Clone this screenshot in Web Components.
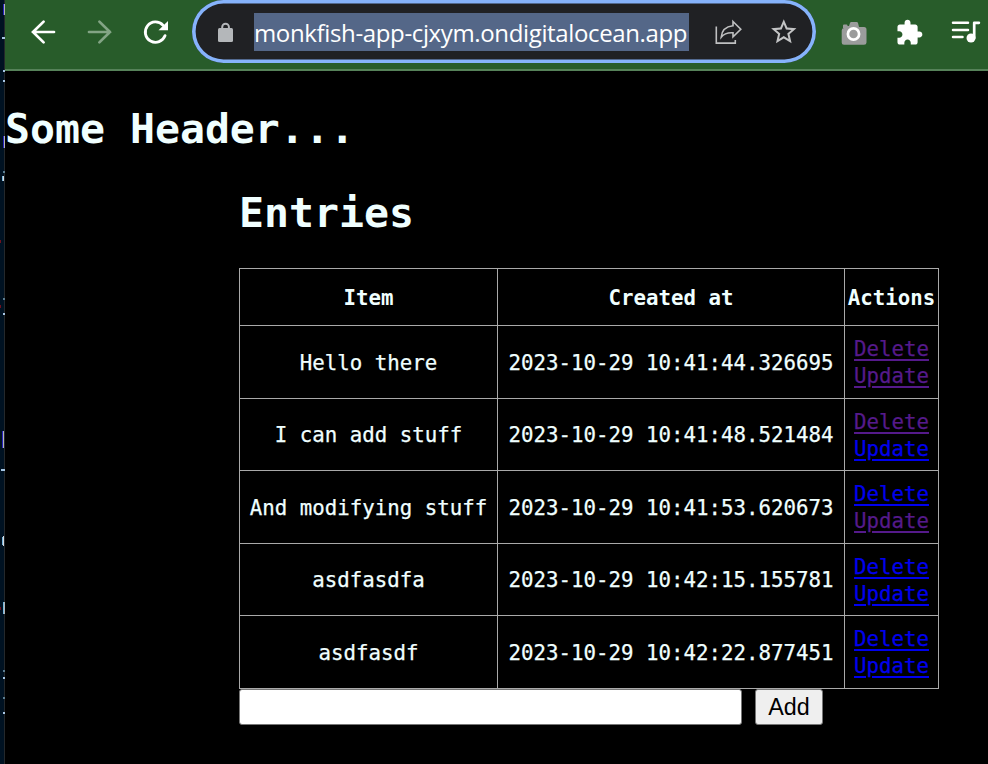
<!DOCTYPE html>
<html lang="en">
<head>
<meta charset="utf-8">
<title>Entries</title>
<style>
html,body{margin:0;height:100%;background:#000;overflow:hidden}
</style>
</head>
<body>
<app-window></app-window>
<script>
const define = (name, html, setup) => customElements.define(name, class extends HTMLElement {
  connectedCallback() {
    if (this.shadowRoot) return;
    const root = this.attachShadow({mode: 'open'});
    const t = document.createElement('template');
    t.innerHTML = html;
    root.append(t.content.cloneNode(true));
    if (setup) setup(this, root);
  }
});

const icons = {
  back: [16, '<path d="M54 32H33M43.6 21.6 33 32l10.6 10.4" fill="none" stroke="#fff" stroke-width="2.7" stroke-linecap="round"/>'],
  forward: [72, '<path d="M89 32h21M99.4 21.6 110 32 99.400 42.400" fill="none" stroke="#83a485" stroke-width="2.7" stroke-linecap="round"/>'],
  reload: [128, '<path d="M165.100 35.600A10.200 10.200 0 1 1 163 25.200" fill="none" stroke="#fff" stroke-width="2.800" stroke-linecap="round"/><path d="M168 21v9.300h-9.500z" fill="#fff"/>'],
  lock: [198, '<rect x="218" y="28" width="15" height="14" rx="1.500" fill="#b4b7ba"/><path d="M222.200 28.500v-1.500a3.350 3.350 0 0 1 6.700 0v1.500" fill="none" stroke="#b4b7ba" stroke-width="2"/>'],
  share: [700, '<path d="M716.300 26.500v16.600h19v-3.200M733 21.500l7.800 7.700-7.800 7.700v-4.100q-8-.5-11.800 4.400.8-10.200 11.800-11.400z" fill="none" stroke="#bfc0c1" stroke-width="1.600"/>'],
  star: [756, '<path transform="translate(768.600 16.600) scale(1.265)" fill="#c3c4c5" d="M22 9.240l-7.190-.62L12 2 9.190 8.630 2 9.240l5.460 4.730L5.820 21 12 17.270 18.180 21l-1.630-7.030L22 9.240zM12 15.400l-3.760 2.270 1-4.280-3.320-2.880 4.380-.38L12 6.100l1.710 4.040 4.380.38-3.320 2.880 1 4.280L12 15.400z"/>'],
  camera: [826, '<path d="M843 28v-2.500q0-1 1-1h2.500q1 0 1 1v.5h1.500l1-3q.3-1 1.300-1h5.400q1 0 1.300 1l1 4h5q2.500 0 2.500 2.500v13q0 2.300-2.500 2.300h-20q-2.300 0-2.300-2.300v-12q0-2.300 2.300-2.500z" fill="#9b9c9c"/><circle cx="853.500" cy="34" r="5.600" fill="#9b9c9c" stroke="#fff" stroke-width="2.700"/>'],
  puzzle: [882, '<path transform="translate(895.100 18.500) scale(1.185)" fill="#fff" d="M20.500 11H19V7c0-1.100-.9-2-2-2h-4V3.500C13 2.120 11.880 1 10.500 1S8 2.120 8 3.500V5H4c-1.100 0-1.990.9-1.990 2v3.800H3.500c1.490 0 2.700 1.210 2.700 2.700s-1.210 2.700-2.700 2.700H2V20c0 1.100.9 2 2 2h3.800v-1.500c0-1.490 1.210-2.700 2.700-2.700 1.490 0 2.700 1.210 2.700 2.700V22H17c1.100 0 2-.9 2-2v-4h1.500c1.380 0 2.500-1.120 2.500-2.500S21.880 11 20.500 11z"/>'],
  queue: [938, '<path d="M953 22.800h15M953 30h15M953 37h9.500" stroke="#fff" stroke-width="2.500" stroke-linecap="round"/><circle cx="971" cy="38" r="4.500" fill="#fff"/><path d="M974.200 38V22.800h4.700" fill="none" stroke="#fff" stroke-width="2.700" stroke-linecap="round" stroke-linejoin="round"/>']
};

define('tool-icon', `<style>:host{display:block;flex:0 0 56px;width:56px;height:64px}svg{display:block}</style><svg width="56" height="64"></svg>`, (el, root) => {
  const [x, body] = icons[el.getAttribute('name')];
  const svg = root.querySelector('svg');
  svg.setAttribute('viewBox', `${x} 0 56 64`);
  svg.innerHTML = body;
});

define('address-bar', `<style>
:host{display:flex;flex:0 0 624px;box-sizing:border-box;height:63px;border-radius:32px;background:#202124;box-shadow:inset 0 0 0 3.600px #86b3fb;padding-left:6px;margin:0 10px 0 8px}
.url{flex:0 0 435px;width:435px;height:38px;margin-top:13px;background:#546788;color:#fff;font:24px/39px "Open Sans","Noto Sans",sans-serif;white-space:nowrap;letter-spacing:-.36px}
.gap{flex:0 0 11px}
</style><tool-icon name="lock"></tool-icon><span class="url"><slot></slot></span><span class="gap"></span><tool-icon name="share"></tool-icon><tool-icon name="star"></tool-icon>`);

define('browser-toolbar', `<style>
:host{display:flex;box-sizing:border-box;height:71px;background:#285c2a;border-bottom:2px solid #568259;padding-left:11px;overflow:hidden}
</style><tool-icon name="back"></tool-icon><tool-icon name="forward"></tool-icon><tool-icon name="reload"></tool-icon>
<address-bar>monkfish-app-cjxym.ondigitalocean.app</address-bar>
<tool-icon name="camera"></tool-icon><tool-icon name="puzzle"></tool-icon><tool-icon name="queue"></tool-icon>`);

define('window-edge', `<style>:host{display:block;flex:0 0 5px;width:5px;height:764px;background:#001222}svg{display:block}</style>
<svg width="5" height="764" shape-rendering="crispEdges"><path d="M4.500 0v764" stroke="#24282b"/>
<path d="M3.500 4v11M3.500 136v12M2.500 431v17" stroke="#2522bd"/><path d="M4.500 4v11M4.500 136v12M3.500 431v17M4.500 602v12" stroke="#b5b5b5"/>
<path d="M2 38h3M3 71h2M3 81h2M3 314h2M1 470h4M3 678h2M3 713h2" stroke="#a7c6e4" stroke-width="2"/>
<path d="M3 172h2M3 299h2M3 671h2M3 698h2" stroke="#5c7d90" stroke-width="2"/>
<path d="M2.500 176v5M2.500 537v8M3.500 602v12" stroke="#77b5dc"/><path d="M3.500 176v5M3.500 536v10" stroke="#d5dbe0"/>
<path d="M0 241.500h1M0 306.500h1M0 608h1" stroke="#72101c" stroke-width="3"/></svg>`);

define('page-title', `<style>:host{display:block;height:50px}h1{margin:0;color:#f0ffff;font:bold 41.500px/50px "DejaVu Sans Mono",monospace;white-space:pre}</style><h1><slot></slot></h1>`);

define('entry-row', `<style>
:host{display:contents}
div{background:#000;display:flex;flex-direction:column;align-items:center;justify-content:center;line-height:27px;padding-top:2px;box-sizing:border-box;white-space:pre;-webkit-text-stroke:.25px}
:host([head]) div{font-weight:bold;-webkit-text-stroke:0}
a{color:#00e;text-decoration:underline;text-decoration-thickness:2px;text-underline-offset:3px}
a.visited{color:#551a8b}
</style><div><slot></slot></div><div class="date"></div><div class="actions"></div>`, (el, root) => {
  root.querySelector('.date').textContent = el.getAttribute('created');
  const actions = root.querySelector('.actions');
  if (el.hasAttribute('head')) { actions.textContent = 'Actions'; return; }
  for (const name of ['Delete', 'Update']) {
    const a = document.createElement('a');
    a.href = '#' + name.toLowerCase();
    a.textContent = name;
    if ((el.getAttribute('visited') || '').includes(name)) a.className = 'visited';
    actions.append(a);
  }
});

define('entry-table', `<style>
:host{display:grid;box-sizing:border-box;width:700px;grid-template-columns:257px 346px 93px;grid-template-rows:56px 72px 71px 72px 71px 72px;gap:1px;padding:1px;background:#a9a9a9;color:#f0ffff;font:20.750px "DejaVu Sans Mono",monospace}
</style><slot></slot>`);

define('entry-form', `<style>
:host{display:flex;gap:13px}
input,button{box-sizing:border-box;height:36px;margin:0;border:1px solid #767676;border-radius:3px}
input{width:503px;background:#fff}
button{width:68px;background:#efefef;color:#000;font:23.300px "Liberation Sans",Arial,sans-serif;padding:0}
</style><input type="text" aria-label="Item"><button>Add</button>`);

define('app-window', `<style>
:host{display:flex;width:988px;height:764px;overflow:hidden;background:#000}
main{flex:1;min-width:0}
.top{padding-top:33px}
section{padding:34px 0 0 234px}
entry-table{margin-top:30px}
</style><window-edge></window-edge><main><browser-toolbar></browser-toolbar>
<page-title class="top">Some Header...</page-title>
<section><page-title>Entries</page-title>
<entry-table>
<entry-row head created="Created at">Item</entry-row>
<entry-row created="2023-10-29 10:41:44.326695" visited="Delete Update">Hello there</entry-row>
<entry-row created="2023-10-29 10:41:48.521484" visited="Delete">I can add stuff</entry-row>
<entry-row created="2023-10-29 10:41:53.620673" visited="Update">And modifying stuff</entry-row>
<entry-row created="2023-10-29 10:42:15.155781">asdfasdfa</entry-row>
<entry-row created="2023-10-29 10:42:22.877451">asdfasdf</entry-row>
</entry-table><entry-form></entry-form></section></main>`);
</script>
</body>
</html>
